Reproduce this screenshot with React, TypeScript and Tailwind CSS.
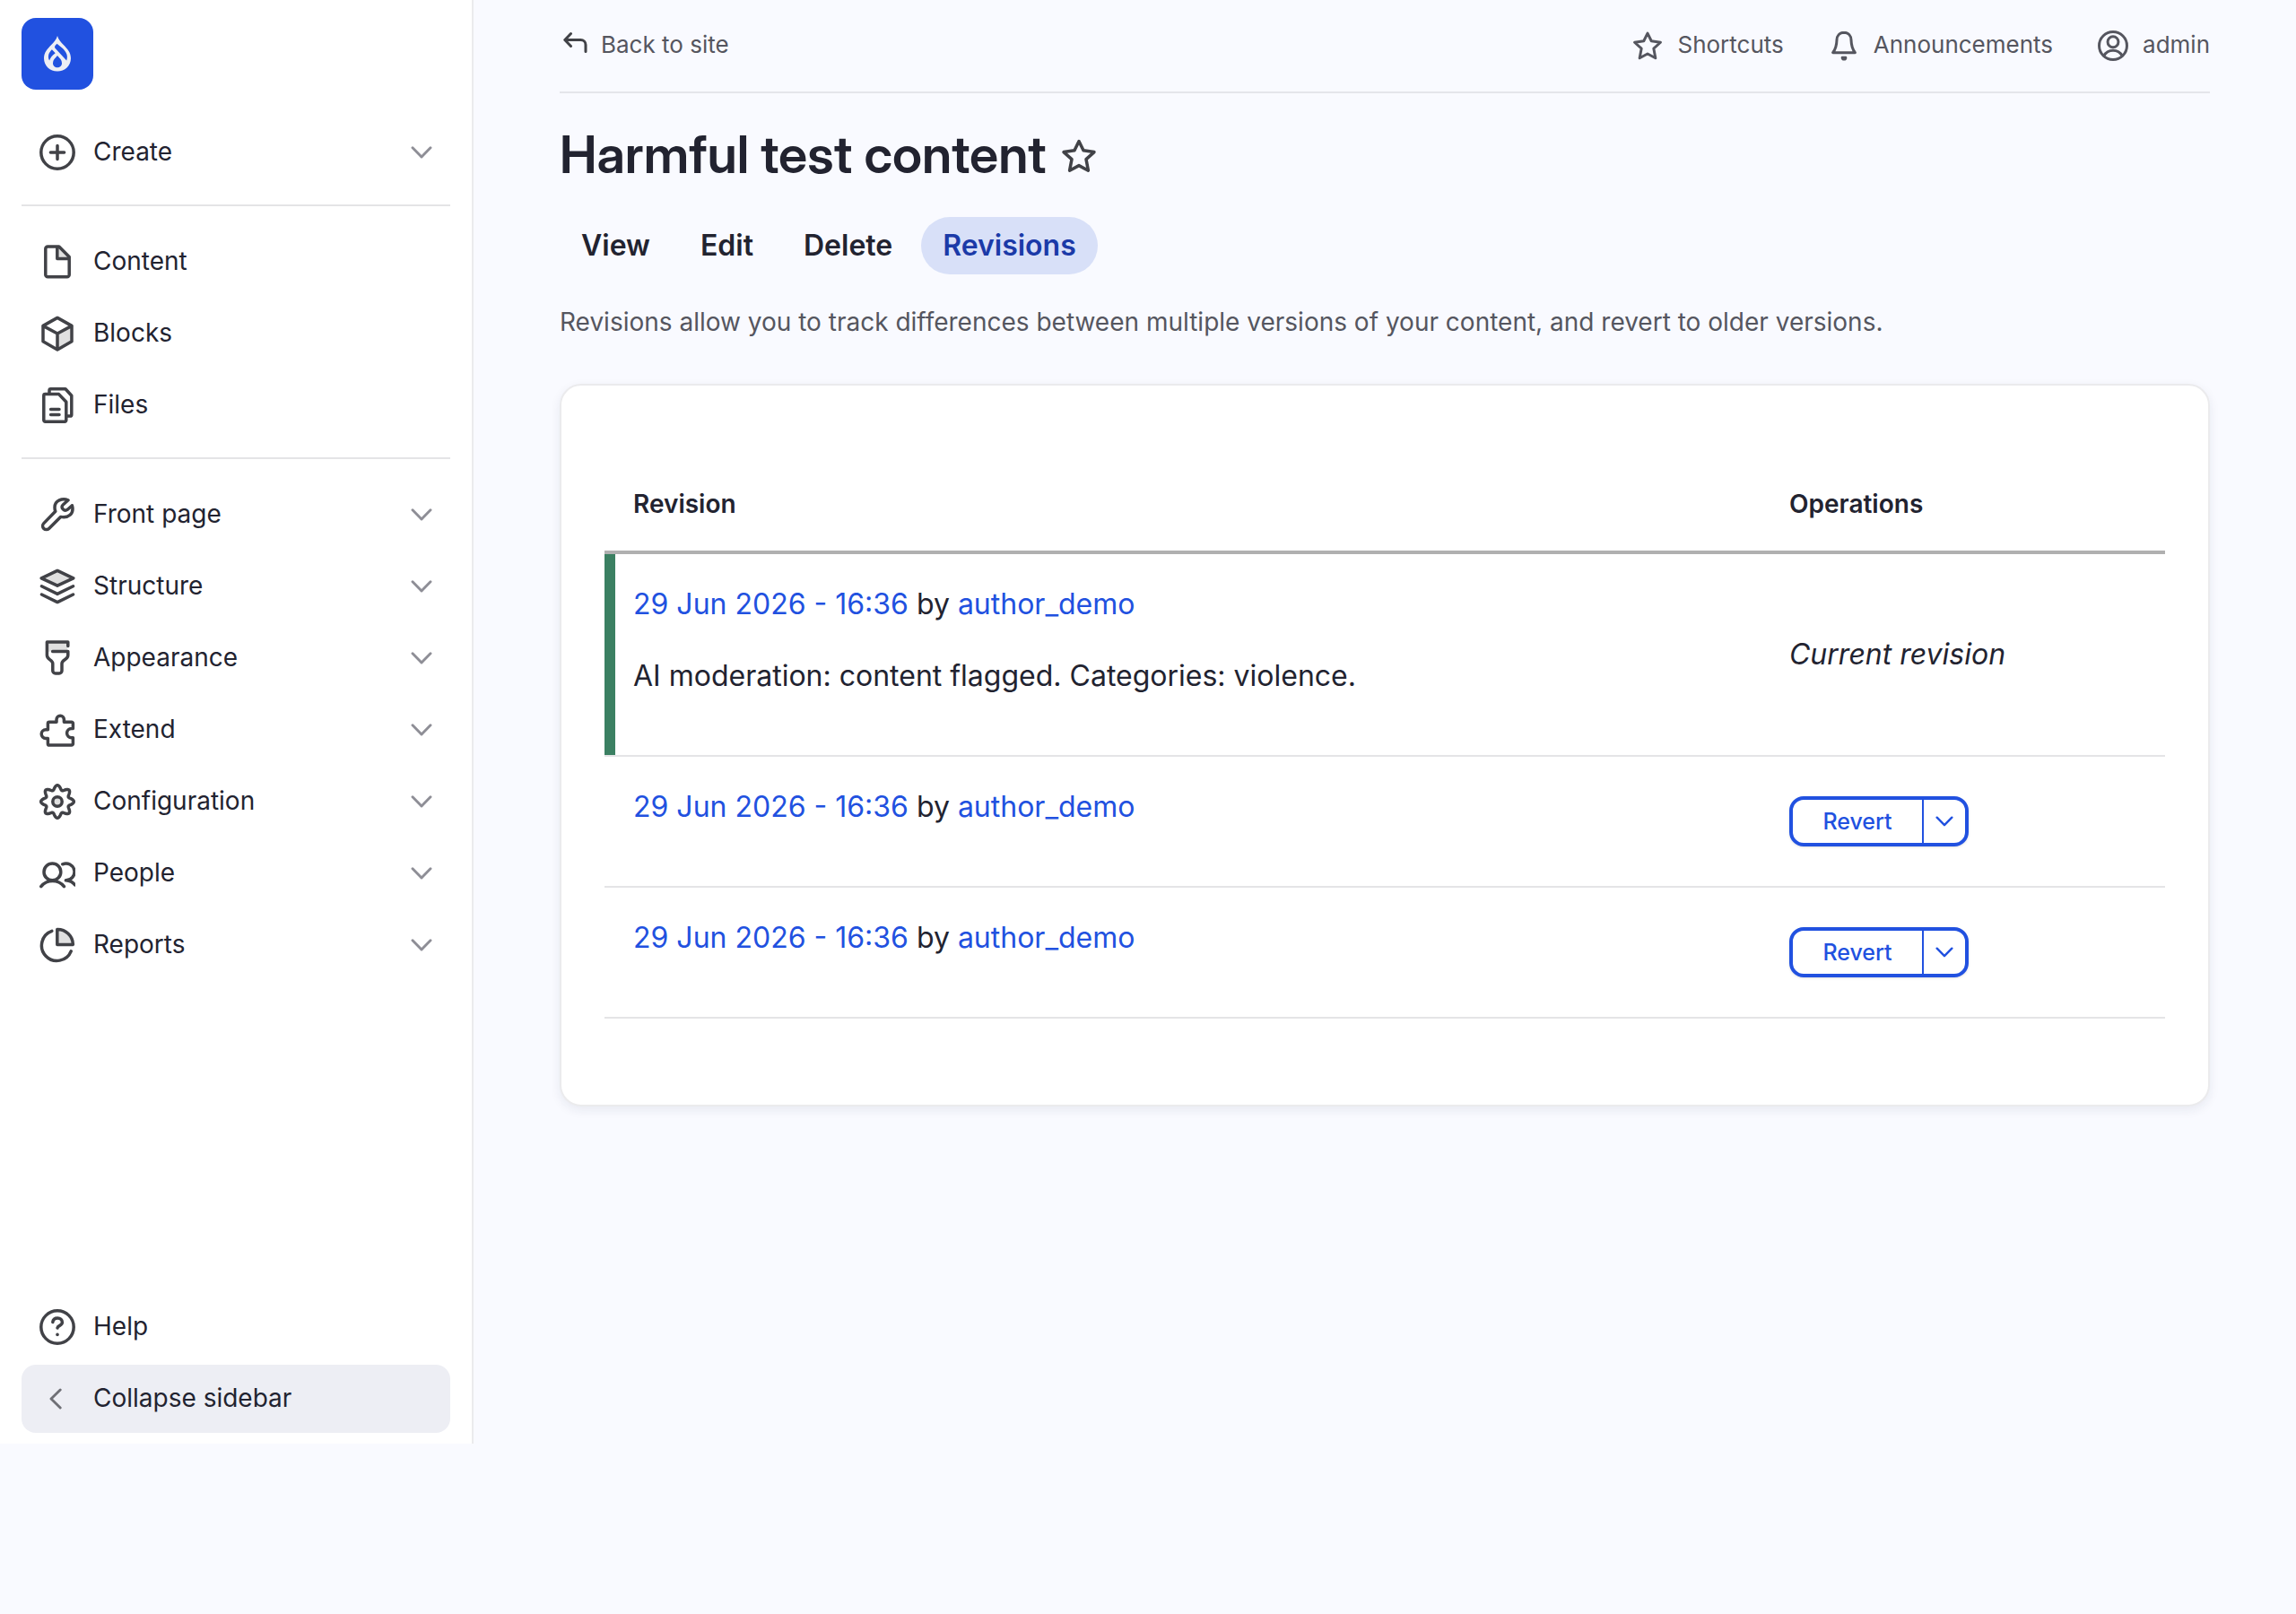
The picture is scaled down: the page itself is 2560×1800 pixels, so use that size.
import React from "react";

type IconProps = { className?: string };

const stroke = {
  fill: "none",
  stroke: "currentColor",
  strokeWidth: 1.75,
  strokeLinecap: "round" as const,
  strokeLinejoin: "round" as const,
};

function Svg({ className = "size-10", children }: { className?: string; children: React.ReactNode }) {
  return (
    <svg viewBox="0 0 20 20" className={className} aria-hidden="true" {...stroke}>
      {children}
    </svg>
  );
}

const CreateIcon = () => (
  <Svg>
    <circle cx="10" cy="10" r="9.1" />
    <path d="M10 6.2v7.6M6.2 10h7.6" />
  </Svg>
);
const ContentIcon = () => (
  <Svg>
    <path d="M10 1.5v6.7h6.6z" fill="#e0e0e0" stroke="none" />
    <path d="M10.9 1.5H4.600a1.200 1.200 0 0 0-1.200 1.200v14.500a1.200 1.200 0 0 0 1.200 1.200h10.800a1.200 1.200 0 0 0 1.200-1.200V7.200zM9.900 1.600V8.200h6.700" />
  </Svg>
);
const BlocksIcon = () => (
  <Svg>
    <path d="M10 10l8-4.300v8.800L10 19z" fill="#e0e0e0" stroke="none" />
    <path d="M10 1.200l8 4.500v8.700L10 19l-8-4.600V5.700zM2 5.700l8 4.300 8-4.300M10 10v9" />
  </Svg>
);
const FilesIcon = () => (
  <Svg>
    <path d="M3.200 3.800h7.600l4.100 4.300v10.200a.8.8 0 0 1-.8.8H3.200a.8.8 0 0 1-.8-.8V4.600a.8.8 0 0 1 .8-.8zM5.500 3.200V1.700a.8.8 0 0 1 .8-.8h8.200L17.900 4.600v10.600a.8.8 0 0 1-.8.8h-1.500M6.300 12.200H11M6.300 15.300H11" />
  </Svg>
);
const WrenchIcon = () => (
  <Svg>
    <path d="M16 1.900C12.800.6 8.500 2 8.500 6c0 .9.1 1.500.4 2.100L2.400 14.800a2 2 0 0 0 2.900 2.900L11.800 11.200c4.200.9 7.700-1.600 6.400-6.300L15.700 7.100c-.9.7-1.900.6-2.600-.2-.7-.7-.8-1.700 0-2.400z" />
  </Svg>
);
const StructureIcon = () => (
  <Svg>
    <path d="M10 1.200l8.900 4.200L10 9.600 1.100 5.400z" fill="#e0e0e0" />
    <path d="M1.200 9.900L10 14.200l8.800-4.300M1.200 14.500L10 18.800l8.800-4.300" />
  </Svg>
);
const AppearanceIcon = () => (
  <Svg>
    <path d="M4.200 1.200h11.300v4.900H6.500l-2.300.5z" fill="#e0e0e0" stroke="none" />
    <path d="M15.900 3.200V1H4.200v7.400c0 2.600 3.200 2.400 3.200 4.600v4a1.500 1.500 0 0 0 1.500 1.500h2.100a1.500 1.500 0 0 0 1.500-1.500v-4c0-2.200 3.400-2 3.400-4.600V6.300H7.300" />
  </Svg>
);
const ExtendIcon = () => (
  <Svg>
    <path d="M5.500 5.600h4V4.200a2.100 2.100 0 0 1 4.200 0v1.400h4.200a.8.8 0 0 1 .8.800v2.800h-.8a2.500 2.500 0 0 0 0 5.200h.8v3.300a.8.800 0 0 1-.8.800H5.500a.8.800 0 0 1-.8-.8v-3h-1.200a2.400 2.400 0 0 1 0-4.800h1.200V6.400a.8.800 0 0 1 .8-.8z" />
  </Svg>
);

const gearPath =
  Array.from({ length: 144 }, (_, i) => {
    const angle = (i / 144) * Math.PI * 2;
    const radius = 7.9 + 1.25 * Math.cos(8 * angle);
    const x = (10 + radius * Math.sin(angle)).toFixed(2);
    const y = (10 - radius * Math.cos(angle)).toFixed(2);
    return `${i === 0 ? "M" : "L"}${x} ${y}`;
  }).join("") + "z";

const GearIcon = () => (
  <Svg>
    <circle cx="10" cy="10" r="2.6" fill="#e0e0e0" />
    <path d={gearPath} />
  </Svg>
);
const PeopleIcon = () => (
  <Svg>
    <circle cx="7.200" cy="9.200" r="4.700" />
    <path d="M.9 17.300a8.200 8.200 0 0 1 12.800 0M12.900 4.900a4.700 4.700 0 1 1 1.800 9M14.700 13.900c2 .1 3.900 1 5.100 2.600" />
  </Svg>
);
const ReportsIcon = () => (
  <Svg>
    <path d="M9.900 1.300a8.600 8.600 0 0 1 8.800 8.400H9.900z" fill="#e0e0e0" />
    <path d="M6.900 2.200a8.500 8.500 0 1 0 10.700 11.200" />
  </Svg>
);
const HelpIcon = () => (
  <Svg>
    <circle cx="10" cy="10" r="9.100" />
    <path d="M7.400 7.200c.2-1.400 1.300-2.200 2.700-2.200 1.500 0 2.600 1 2.600 2.400 0 1.900-2.500 1.600-2.700 3.100" />
    <circle cx="10" cy="14.200" r=".9" fill="currentColor" stroke="none" />
  </Svg>
);
const StarIcon = ({ className = "size-[34px]" }: IconProps) => (
  <Svg className={className}>
    <path d="M10 1.800l2.500 5.100 6 .9-4.500 4 1.200 6.300-5.200-2.800-5.200 2.800 1.200-6.300-4.500-4 6-.9z" />
  </Svg>
);
const BellIcon = () => (
  <Svg className="size-[34px]">
    <path d="M10 1.300c-3 0-4.600 2.200-4.700 4.800-.1 3.500-.6 6-2.600 8.400h14.600c-2-2.400-2.500-4.900-2.600-8.400-.1-2.600-1.700-4.800-4.700-4.800z" />
    <path d="M8.900 17.800a1.100 1.100 0 0 0 2.200 0z" />
  </Svg>
);
const UserIcon = () => (
  <Svg className="size-[34px]">
    <circle cx="10" cy="10" r="9.100" />
    <circle cx="10" cy="7.500" r="3.500" />
    <path d="M4 16.600a6.900 6.900 0 0 1 12 0" />
  </Svg>
);
const BackIcon = () => (
  <svg viewBox="0 0 28 32" className="h-8 w-7" aria-hidden="true" {...stroke} strokeWidth={3}>
    <path d="M8.500 2.500L1.800 9.500l6.700 7M2.200 9.500H19.500a5.500 5.500 0 0 1 5.500 5.500v7.500" />
  </svg>
);
const Chevron = ({ className = "" }: IconProps) => (
  <svg viewBox="0 0 24 14" className={className} aria-hidden="true" {...stroke} strokeWidth={2.900}>
    <path d="M2 1.800L12 12 22 1.800" />
  </svg>
);
const DropIcon = () => (
  <svg viewBox="0 0 30 40" className="h-10 w-[30px] text-[#edeef4]" fill="currentColor" aria-hidden="true">
    <path
      fillRule="evenodd"
      d="M15 0c1.200 4.500 4 7 7 10.200C26 14.300 30 18.500 30 25c0 8.500-6.700 14.600-15 14.600S0 33.500 0 25c0-6.500 4-10.700 8-14.800C11 7 13.800 4.500 15 0zM14.500 8.700c-1.200 1.200-2.500 2.500-2.500 3.700 0 .7.400 1.300 1.200 2.100L25.200 27.500c2-5.500-.3-9.500-4-13.300zM8.900 15.200c-3.400 3.300-5.300 7.500-2.800 12.300C7 24.500 9 22 12.700 19.200zM15 22c-2.800 3.200-5 5-5 8.400 0 2.900 2.200 4.900 5 4.900s5-2 5-4.900c0-3.400-2.200-5.200-5-8.400z"
    />
  </svg>
);

type Item = { label: string; icon: () => React.ReactElement; expandable?: boolean };

const groups: Item[][] = [
  [{ label: "Create", icon: CreateIcon, expandable: true }],
  [
    { label: "Content", icon: ContentIcon },
    { label: "Blocks", icon: BlocksIcon },
    { label: "Files", icon: FilesIcon },
  ],
  [
    { label: "Front page", icon: WrenchIcon, expandable: true },
    { label: "Structure", icon: StructureIcon, expandable: true },
    { label: "Appearance", icon: AppearanceIcon, expandable: true },
    { label: "Extend", icon: ExtendIcon, expandable: true },
    { label: "Configuration", icon: GearIcon, expandable: true },
    { label: "People", icon: PeopleIcon, expandable: true },
    { label: "Reports", icon: ReportsIcon, expandable: true },
  ],
];

function NavItem({ label, icon: Icon, expandable }: Item) {
  const content = (
    <>
      <span className="text-[#414247]">
        <Icon />
      </span>
      <span className="flex-1 pb-0.5 text-left">{label}</span>
      {expandable && <Chevron className="h-3.5 w-6 text-[#8e8e96]" />}
    </>
  );
  const cls = "flex h-20 w-full items-center gap-5 px-5";
  return (
    <li>
      {expandable ? (
        <button type="button" aria-expanded="false" className={cls}>
          {content}
        </button>
      ) : (
        <a href="#" className={cls}>
          {content}
        </a>
      )}
    </li>
  );
}

function Sidebar() {
  return (
    <aside className="flex min-h-[1610px] w-[528px] shrink-0 flex-col border-r-2 border-[#ebebed] bg-white px-6 pt-5 pb-3 text-[28px] leading-9">
      <a href="#" aria-label="Home" className="flex size-20 items-center justify-center rounded-2xl bg-[#2151e0]">
        <DropIcon />
      </a>
      <nav aria-label="Administration" className="pt-[30px]">
        {groups.map((group, i) => (
          <ul key={i} className={i === 0 ? "" : "mt-[18px] border-t-2 border-[#e4e4e6] pt-[22px]"}>
            {group.map((item) => (
              <NavItem key={item.label} {...item} />
            ))}
          </ul>
        ))}
      </nav>
      <div className="mt-auto">
        <ul>
          <NavItem label="Help" icon={HelpIcon} />
        </ul>
        <button type="button" className="mt-0.5 flex h-[76px] w-full items-center gap-6 rounded-2xl bg-[#edeef4] px-5">
          <span className="flex size-9 items-center justify-center">
            <Chevron className="h-3.5 w-6 rotate-90 text-[#6f7076]" />
          </span>
          <span className="pb-0.5">Collapse sidebar</span>
        </button>
      </div>
    </aside>
  );
}

function TopBar() {
  return (
    <header className="flex h-26 items-center justify-between border-b-2 border-[#e4e5ea] text-[26px] leading-9 text-[#55565f]">
      <a href="#" className="flex items-center gap-3.5 pl-1">
        <span className="text-[#414247]">
          <BackIcon />
        </span>
        <span className="pb-0.5">Back to site</span>
      </a>
      <div className="flex items-center gap-[50px]">
        <button type="button" className="flex items-center gap-4">
          <StarIcon /> <span className="pb-0.5">Shortcuts</span>
        </button>
        <button type="button" className="flex items-center gap-4">
          <BellIcon /> <span className="pb-0.5">Announcements</span>
        </button>
        <button type="button" className="flex items-center gap-4">
          <UserIcon /> <span className="pb-0.5">admin</span>
        </button>
      </div>
    </header>
  );
}

const tabs = ["View", "Edit", "Delete", "Revisions"];

function RevisionText() {
  return (
    <div>
      <a href="#" className="text-[#2151e0]">29 Jun 2026 - 16:36</a> by{" "}
      <a href="#" className="text-[#2151e0]">author_demo</a>
    </div>
  );
}

function SplitButton() {
  return (
    <div className="inline-flex h-14 overflow-hidden rounded-2xl border-4 border-[#2151e0] align-middle text-[#2151e0] shadow-sm">
      <button type="button" className="w-36 text-[25px] leading-8 font-medium">
        Revert
      </button>
      <button type="button" aria-label="List additional actions" className="flex w-12 items-center justify-center border-l-2 border-[#2151e0]">
        <Chevron className="h-3 w-5" />
      </button>
    </div>
  );
}

export default function App() {
  return (
    <div className="flex min-h-screen items-start bg-[#f9faff] font-['Inter',sans-serif] text-[#222330]">
      <Sidebar />
      <main className="min-w-0 flex-1 px-24">
        <TopBar />
        <div className="mt-8 flex items-center gap-4">
          <h1 className="font-['Inter_Display','Inter',sans-serif] text-[58px] leading-[72px] font-semibold">
            Harmful test content
          </h1>
          <button type="button" aria-label="Add to shortcuts" className="pt-1 text-[#414247]">
            <StarIcon className="size-10" />
          </button>
        </div>
        <nav aria-label="Tabs" className="mt-[34px] flex gap-2 text-[32px] font-[560]">
          {tabs.map((tab) => (
            <a
              key={tab}
              href="#"
              aria-current={tab === "Revisions" ? "page" : undefined}
              className={
                tab === "Revisions"
                  ? "flex h-16 items-center rounded-full bg-[#d8e0f8] px-6 text-[#1b3aa8]"
                  : "flex h-16 items-center rounded-full px-6"
              }
            >
              {tab}
            </a>
          ))}
        </nav>
        <p className="mt-8 text-[28px] leading-[42px] text-[#55565f]">
          Revisions allow you to track differences between multiple versions of your content, and revert to older
          versions.
        </p>
        <section className="mt-12 rounded-3xl border-2 border-[#ebebed] bg-white px-12 pt-12 pb-24 shadow-[0_4px_12px_rgba(30,40,80,0.08)]">
          <table className="w-full border-collapse text-left text-[32px] leading-[48px]">
            <thead>
              <tr className="h-[138px] border-b-4 border-[#b0b0b0] text-[28px] leading-9">
                <th className="pt-8 pl-8 font-semibold">Revision</th>
                <th className="w-[419px] pt-8 font-semibold">Operations</th>
              </tr>
            </thead>
            <tbody>
              <tr className="border-b-2 border-[#e4e4e6]">
                <td className="p-8 shadow-[inset_12px_0_0_#3b8062]">
                  <RevisionText />
                  <p className="my-8">AI moderation: content flagged. Categories: violence.</p>
                </td>
                <td className="italic">Current revision</td>
              </tr>
              {[1, 2].map((n) => (
                <tr key={n} className="border-b-2 border-[#e4e4e6]">
                  <td className="px-8 pt-8 pb-16">
                    <RevisionText />
                  </td>
                  <td>
                    <SplitButton />
                  </td>
                </tr>
              ))}
            </tbody>
          </table>
        </section>
      </main>
    </div>
  );
}
